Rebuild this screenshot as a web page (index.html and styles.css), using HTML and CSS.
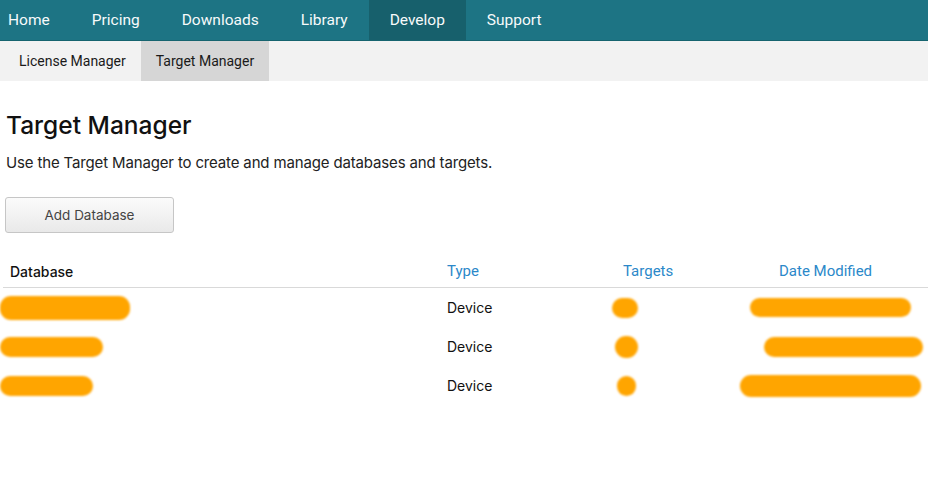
FILE: index.html
```html
<!DOCTYPE html>
<html>
<head>
<meta charset="utf-8">
<link rel="stylesheet" href="styles.css">
</head>
<body>
<nav class="topnav">
  <a class="topnav-item first">Home</a>
  <a class="topnav-item">Pricing</a>
  <a class="topnav-item">Downloads</a>
  <a class="topnav-item">Library</a>
  <a class="topnav-item active">Develop</a>
  <a class="topnav-item">Support</a>
</nav>
<nav class="subnav">
  <a class="subnav-item">License Manager</a>
  <a class="subnav-item active">Target Manager</a>
</nav>
<main class="content">
  <h1 class="title">Target Manager</h1>
  <p class="intro">Use the Target Manager to create and manage databases and targets.</p>
  <button class="btn">Add Database</button>
  <div class="table">
    <div class="row head">
      <div class="cell db">Database</div>
      <div class="cell link">Type</div>
      <div class="cell link">Targets</div>
      <div class="cell link">Date Modified</div>
    </div>
    <div class="row">
      <div class="cell"><span class="blob b-db1"></span></div>
      <div class="cell">Device</div>
      <div class="cell"><span class="blob b-t1"></span></div>
      <div class="cell"><span class="blob b-d1"></span></div>
    </div>
    <div class="row">
      <div class="cell"><span class="blob b-db2"></span></div>
      <div class="cell">Device</div>
      <div class="cell"><span class="blob b-t2"></span></div>
      <div class="cell"><span class="blob b-d2"></span></div>
    </div>
    <div class="row">
      <div class="cell"><span class="blob b-db3"></span></div>
      <div class="cell">Device</div>
      <div class="cell"><span class="blob b-t3"></span></div>
      <div class="cell"><span class="blob b-d3"></span></div>
    </div>
  </div>
</main>
</body>
</html>
```
FILE: styles.css
```css
* { box-sizing: border-box; }
html, body { margin: 0; padding: 0; background: #fff; }
body { font-family: Inter, "Liberation Sans", sans-serif; color: #111; overflow: hidden; }

.topnav {
  display: flex;
  height: 41px;
  background: #1d7484;
  border-bottom: 1px solid #16646f;
}
.topnav-item {
  display: flex;
  align-items: center;
  padding: 0 21px;
  font-family: Roboto, sans-serif;
  font-size: 15.5px;
  color: #f7fafb;
}
.topnav-item.first { padding-left: 8px; }
.topnav-item.active { background: #17606c; }

.subnav {
  display: flex;
  height: 40px;
  padding-left: 4px;
  background: #f2f2f2;
}
.subnav-item {
  display: flex;
  align-items: center;
  padding: 0 15px;
  font-family: Roboto, sans-serif;
  font-size: 14px;
  color: #1a1a1a;
}
.subnav-item.active { background: #d6d6d6; }

.content { padding: 0 0 0 6px; }
.title {
  margin: 28px 0 0;
  font-size: 24.5px;
  line-height: 32px;
  font-weight: 500;
  color: #111;
}
.intro {
  margin: 12px 0 0;
  font-size: 15px;
  letter-spacing: -0.15px;
  line-height: 20px;
  color: #222;
}
.btn {
  display: block;
  margin: 24px 0 0 -1px;
  width: 169px;
  height: 36px;
  border: 1px solid #c6c6c6;
  border-radius: 3px;
  background: linear-gradient(#fbfbfb, #e9e9e9);
  font-family: Inter, sans-serif;
  font-size: 13.5px;
  color: #444;
}

.table { margin: 24px 0 0 -3px; }
.row {
  display: grid;
  grid-template-columns: 437px 176px 156px 1fr;
  height: 39px;
  align-items: center;
}
.row.head {
  height: 31px;
  border-bottom: 1px solid #d9d9d9;
  align-items: end;
  padding-bottom: 7px;
}
.cell { padding-left: 7px; font-size: 14px; color: #111; white-space: nowrap; }
.cell.db { font-weight: 500; }
.cell.link { font-family: Roboto, sans-serif; font-size: 15px; color: #2b88c9; }

.blob {
  display: block;
  height: 20px;
  background: #ffa500;
  border-radius: 11px;
  filter: blur(0.8px);
}
.b-db1 { width: 130px; height: 24px; margin-left: -10px; }
.b-db2 { width: 103px; margin-left: -10px; }
.b-db3 { width: 93px; margin-left: -10px; }
.b-t1 { width: 26px; margin-left: -11px; }
.b-t2 { width: 23px; height: 22px; margin-left: -8px; }
.b-t3 { width: 19px; margin-left: -6px; }
.b-d1 { width: 161px; height: 19px; margin-left: -29px; }
.b-d2 { width: 159px; margin-left: -15px; }
.b-d3 { width: 181px; height: 22px; margin-left: -39px; }
```
